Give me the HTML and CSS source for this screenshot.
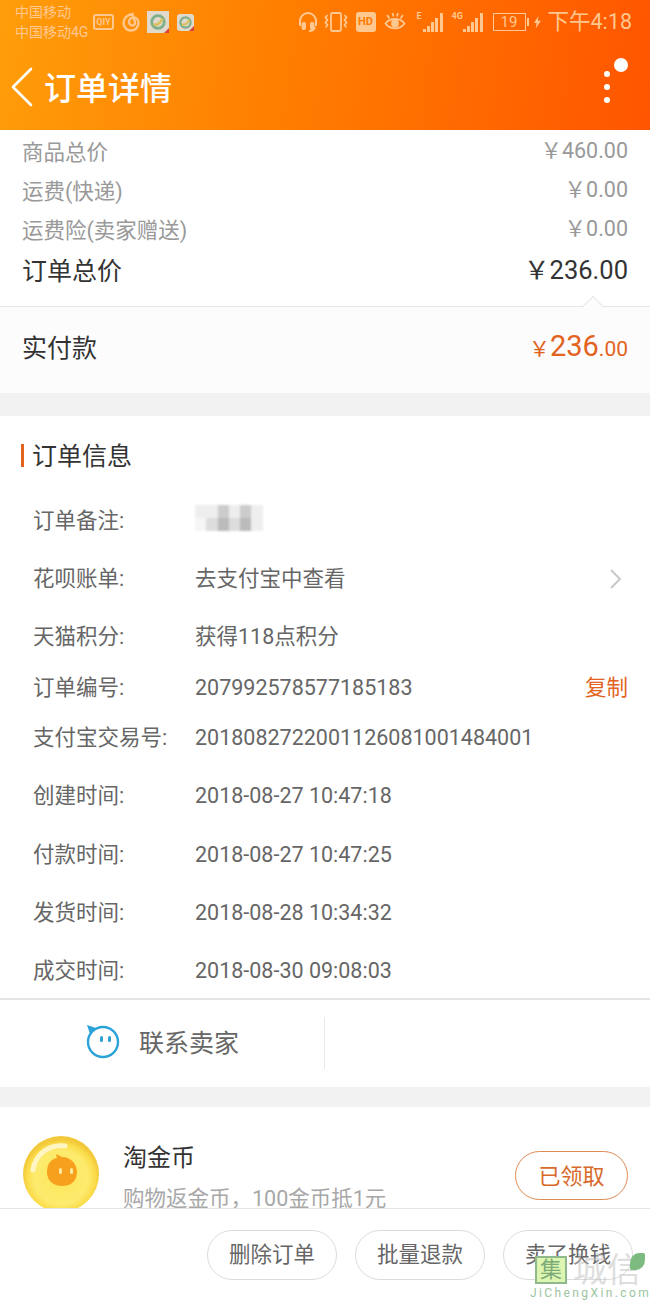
FILE: index.html
```html
<!DOCTYPE html>
<html lang="zh-CN">
<head>
    <meta charset="UTF-8">
    <meta name="viewport" content="width=device-width, initial-scale=1.0">
    <title>订单详情</title>
    <link rel="stylesheet" href="styles.css">
</head>
<body>
    <div class="page">
        <header class="topbar">
            <div class="statusbar">
                <div class="carrier">
                    <div>中国移动</div>
                    <div>中国移动4G</div>
                </div>
                <div class="app-icons">
                    <span class="qiyi">QIY</span>
                    <svg width="20" height="20" viewBox="0 0 20 20" fill="none" stroke="#ffc890" stroke-width="2.4"><path d="M11.500 2C6 3 2.500 6.500 2.500 11a7.500 7.500 0 0 0 15 0c0-3-2-5.500-5-5.500-2.500 0-4.500 2-4.500 4.500s2 3.500 3.500 3.500 3-1.500 2.500-3.500c-.5-2-1.500-3.500-2.500-8z"/></svg>
                    <span class="sim-icon sim-big"><svg width="16" height="16" viewBox="0 0 14 14" fill="none" stroke-width="2.400"><circle cx="7" cy="7" r="5.500" stroke="#7fae8a"/><path d="M3 9c3 1 6-1 8-5" stroke="#d8c060"/></svg></span>
                    <span class="sim-icon sim-small"><svg width="13" height="13" viewBox="0 0 14 14" fill="none" stroke-width="2.400"><circle cx="7" cy="7" r="5.500" stroke="#7fae8a"/><path d="M3 9c3 1 6-1 8-5" stroke="#d8c060"/></svg></span>
                </div>
                <div class="sys-icons">
                    <svg width="20" height="20" viewBox="0 0 20 20" fill="none" stroke="#ffc890" stroke-width="2"><path d="M2 14V9a8 8 0 0 1 16 0v5"/><rect x="4.500" y="11" width="2.500" height="6" rx="1" fill="#ffc890"/><rect x="13" y="11" width="2.500" height="6" rx="1" fill="#ffc890"/><path d="M17 15c-.5 2.500-3 4-6 4"/></svg>
                    <svg class="ic-vib" width="24" height="20" viewBox="0 0 24 20" fill="none" stroke="#ffc890" stroke-width="1.800"><rect x="7" y="1" width="10" height="18" rx="1.500"/><path d="M3.500 3l-2 2.500 2 2.500-2 2.500 2 2.500-2 2.500M20.500 3l2 2.500-2 2.500 2 2.500-2 2.500 2 2.500"/></svg>
                    <span class="hd">HD</span>
                    <svg class="ic-eye" width="22" height="20" viewBox="0 0 22 20" fill="none" stroke="#ffc890" stroke-width="1.800"><path d="M1.500 11.500c4.500-6 14.500-6 19 0-4.500 6.500-14.500 6.500-19 0z"/><circle cx="11" cy="11.500" r="3" fill="#ffc890"/><path d="M3 3l2.500 3.500M8.500 1l1 3.500M14 1l-1 3.500M19 3l-2.500 3.500"/></svg>
                    <span class="signal signal-e">
                        <span class="net">E</span>
                        <i class="b1"></i><i class="b2"></i><i class="b3"></i><i class="b4"></i><i class="b5"></i>
                    </span>
                    <span class="signal signal-4g">
                        <span class="net">4G</span>
                        <i class="b1"></i><i class="b2"></i><i class="b3"></i><i class="b4"></i><i class="b5"></i>
                    </span>
                    <span class="battery">19</span>
                    <span class="battery-tip"></span>
                    <svg class="ic-bolt" width="7" height="14" viewBox="0 0 8 14" fill="#ffc890"><path d="M5 0L0 8h3l-1 6 6-8.500H4.500z"/></svg>
                </div>
                <div class="clock">下午4:18</div>
            </div>
            <div class="navbar">
                <svg class="back" width="24" height="40" viewBox="0 0 24 40" fill="none" stroke="#fff" stroke-width="2.600" stroke-linecap="round" stroke-linejoin="round"><path d="M21 2L3 20l18 18"/></svg>
                <h1>订单详情</h1>
                <div class="more">
                    <span class="more-badge"></span>
                    <span class="dot"></span>
                    <span class="dot"></span>
                    <span class="dot"></span>
                </div>
            </div>
        </header>

        <main class="content">
            <section class="prices">
                <div class="price-row"><span>商品总价</span><span class="money">￥460.00</span></div>
                <div class="price-row"><span>运费(快递)</span><span class="money">￥0.00</span></div>
                <div class="price-row"><span>运费险(卖家赠送)</span><span class="money">￥0.00</span></div>
                <div class="price-row total"><span>订单总价</span><span class="money">￥236.00</span></div>
            </section>
            <section class="paid">
                <span class="notch"></span>
                <span>实付款</span>
                <span class="paid-money"><small>￥</small><b>236</b><em>.00</em></span>
            </section>

            <section class="info">
                <h2>订单信息</h2>
                <div class="info-row"><span class="key">订单备注:</span>
                    <span class="mosaic">
                        <i class="m1"></i><i class="m1"></i><i class="m3"></i><i class="m1"></i><i class="m3"></i><i class="m1"></i>
                        <i class="m0"></i><i class="m2"></i><i class="m4"></i><i class="m2"></i><i class="m4"></i><i class="m1"></i>
                    </span>
                </div>
                <div class="info-row"><span class="key">花呗账单:</span><span class="cjk">去支付宝中查看</span>
                    <svg class="chevron" width="14" height="22" viewBox="0 0 14 22" fill="none" stroke="#c8c8c8" stroke-width="2"><path d="M2 2l9 9-9 9"/></svg>
                </div>
                <div class="info-row"><span class="key">天猫积分:</span><span class="cjk">获得118点积分</span></div>
                <div class="info-row tight"><span class="key">订单编号:</span><span>207992578577185183</span><span class="copy cjk">复制</span></div>
                <div class="info-row"><span class="key">支付宝交易号:</span><span>2018082722001126081001484001</span></div>
                <div class="info-row"><span class="key">创建时间:</span><span>2018-08-27 10:47:18</span></div>
                <div class="info-row"><span class="key">付款时间:</span><span>2018-08-27 10:47:25</span></div>
                <div class="info-row"><span class="key">发货时间:</span><span>2018-08-28 10:34:32</span></div>
                <div class="info-row"><span class="key">成交时间:</span><span>2018-08-30 09:08:03</span></div>
            </section>

            <section class="contact">
                <div class="contact-item">
                    <svg width="36" height="36" viewBox="0 0 36 36" fill="none"><circle cx="18" cy="18" r="15" stroke="#2ba3d8" stroke-width="2.400"/><path d="M2 1l9 3-6 6z" fill="#2ba3d8"/><rect x="15" y="12" width="3" height="6" rx="1.500" fill="#2ba3d8"/><rect x="23" y="12" width="3" height="6" rx="1.500" fill="#2ba3d8"/></svg>
                    <span>联系卖家</span>
                </div>
                <div class="contact-item"></div>
            </section>

            <section class="coin">
                <svg class="coin-pic" width="76" height="76" viewBox="0 0 76 76">
                    <defs>
                        <radialGradient id="coin-fill" cx="50%" cy="55%" r="50%">
                            <stop offset="0%" stop-color="#fde65a"/>
                            <stop offset="70%" stop-color="#fdeb6e"/>
                            <stop offset="90%" stop-color="#fbdc4a"/>
                            <stop offset="100%" stop-color="#f3c93c"/>
                        </radialGradient>
                    </defs>
                    <circle cx="38" cy="38" r="38" fill="url(#coin-fill)"/>
                    <path d="M10 34a28 28 0 0 1 32-24" stroke="#fff6c4" stroke-width="5" fill="none" stroke-linecap="round"/>
                    <path d="M33 18l6 3c9 0 15 7 15 15 0 10-7 14-15 14s-15-5-15-14c0-8 4-13 10-14z" fill="#f7a01e"/>
                    <rect x="36" y="32" width="3" height="6" rx="1.500" fill="#fde9a0"/>
                    <rect x="47" y="32" width="3" height="6" rx="1.500" fill="#fde9a0"/>
                </svg>
                <div class="coin-text">
                    <div class="coin-title">淘金币</div>
                    <div class="coin-sub">购物返金币，100金币抵1元</div>
                </div>
                <span class="claimed">已领取</span>
            </section>
        </main>

        <footer class="actions">
            <button>删除订单</button>
            <button>批量退款</button>
            <button>卖了换钱</button>
        </footer>

        <!-- watermark -->
        <div class="watermark">
            <div class="wm-top">
                <span class="wm-box">集</span>
                <span class="wm-name">城信</span>
                <span class="wm-leaf"></span>
            </div>
            <div class="wm-url">JiChengXin.com</div>
        </div>
    </div>
</body>
</html>
```

FILE: styles.css
```css
* {
    box-sizing: border-box;
}

html, body {
    margin: 0;
    padding: 0;
}

body {
    font-family: Roboto, "Noto Sans CJK SC", sans-serif;
    color: #666;
    background: #fff;
}

.page {
    position: relative;
    display: flex;
    flex-direction: column;
    width: 650px;
    height: 1300px;
    overflow: hidden;
}

/* top bar */
.topbar {
    height: 130px;
    flex: none;
    background: linear-gradient(98deg, #ff9d0a 0%, #ff7d00 45%, #ff5500 100%);
    color: #fff;
}

.statusbar {
    display: flex;
    align-items: flex-start;
    height: 44px;
    padding: 2px 18px 0 15px;
    color: #ffc890;
}

.carrier {
    width: 78px;
    font-size: 14px;
    line-height: 20px;
}

.app-icons {
    display: flex;
    align-items: center;
    gap: 7px;
    height: 40px;
}

.qiyi {
    width: 21px;
    height: 16px;
    border: 2px solid #ffc890;
    border-radius: 3px;
    font-size: 9px;
    font-weight: 700;
    line-height: 12px;
    text-align: center;
}

.sim-icon {
    position: relative;
    display: flex;
    align-items: center;
    justify-content: center;
    background: #e0d9cc;
}

.sim-icon::after {
    content: "";
    position: absolute;
    right: 0;
    bottom: 0;
    border-style: solid;
    border-width: 0 0 5px 5px;
    border-color: transparent transparent #d8433a transparent;
}

.sim-big {
    width: 22px;
    height: 22px;
    margin-left: -1px;
}

.sim-small {
    width: 17px;
    height: 17px;
    margin-left: 1px;
    border-radius: 3px;
}

.sys-icons {
    display: flex;
    align-items: center;
    height: 40px;
    margin-left: auto;
}

.ic-vib {
    margin-left: 6px;
}

.hd {
    width: 20px;
    height: 20px;
    margin-left: 8px;
    border-radius: 3px;
    background: #ffc890;
    color: #ff7a00;
    font-size: 11px;
    font-weight: 700;
    line-height: 20px;
    text-align: center;
}

.ic-eye {
    margin-left: 8px;
}

.signal {
    position: relative;
    display: flex;
    align-items: flex-end;
    gap: 1.300px;
    height: 20px;
}

.signal-e {
    width: 27px;
    margin-left: 11px;
    padding-left: 6px;
}

.signal-4g {
    width: 32px;
    margin-left: 8px;
    padding-left: 11px;
}

.signal i {
    display: block;
    flex: none;
    width: 3px;
    background: #ffc890;
}

.signal .b1 { height: 3px; }
.signal .b2 { height: 6px; }
.signal .b3 { height: 10px; }
.signal .b4 { height: 14px; }
.signal .b5 { height: 19px; }

.net {
    position: absolute;
    left: 0;
    top: 0;
    font-size: 9px;
    font-weight: 700;
    line-height: 9px;
}

.battery {
    width: 33px;
    height: 18px;
    margin-left: 9px;
    border: 1px solid #ffc890;
    font-size: 15px;
    line-height: 16px;
    text-align: center;
}

.battery-tip {
    width: 2px;
    height: 8px;
    margin-left: 1px;
    background: #ffc890;
}

.ic-bolt {
    margin-left: 5px;
}

.clock {
    margin-left: 7px;
    font-size: 21.500px;
    line-height: 40px;
}

.navbar {
    position: relative;
    display: flex;
    align-items: center;
    height: 86px;
    padding: 0 0 0 10px;
}

.back {
    margin-top: -1px;
}

.navbar h1 {
    margin: -2px 0 0 10px;
    font-size: 32px;
    font-weight: 500;
    color: #fff;
}

.more {
    position: absolute;
    left: 604px;
    top: 27px;
    display: flex;
    flex-direction: column;
    gap: 7px;
}

.dot {
    width: 6px;
    height: 6px;
    border-radius: 50%;
    background: #fff;
}

.more-badge {
    position: absolute;
    left: 10px;
    top: -13px;
    width: 14px;
    height: 14px;
    border-radius: 50%;
    background: #fff;
}

/* main content */
.content {
    flex: 1;
    min-height: 0;
    overflow: hidden;
    background: #f2f2f2;
}

.prices {
    height: 177px;
    padding: 3px 22px 0;
    background: #fff;
    border-bottom: 1px solid #e6e6e6;
}

.price-row {
    display: flex;
    justify-content: space-between;
    align-items: center;
    height: 39px;
    padding-bottom: 5px;
    font-size: 21.500px;
    color: #999;
}

.money {
    margin-top: -3px;
}

.total {
    height: 42px;
    font-size: 25px;
    color: #333;
}

.total .money {
    font-size: 25.500px;
}

.paid {
    position: relative;
    display: flex;
    justify-content: space-between;
    align-items: center;
    height: 86px;
    padding: 0 22px 8px;
    background: #fcfcfc;
    font-size: 25px;
    color: #333;
}

.notch {
    position: absolute;
    right: 49px;
    top: -8px;
    width: 16px;
    height: 16px;
    background: #fcfcfc;
    border-top: 1px solid #e6e6e6;
    border-left: 1px solid #e6e6e6;
    transform: rotate(45deg);
}

.paid-money {
    color: #e2631e;
}

.paid-money small {
    font-size: 21px;
}

.paid-money b {
    font-size: 29px;
    font-weight: 400;
}

.paid-money em {
    font-size: 21px;
    font-style: normal;
}

.info {
    height: 584px;
    margin-top: 23px;
    background: #fff;
    border-bottom: 2px solid #e4e4e4;
}

.info h2 {
    position: relative;
    height: 75px;
    margin: 0;
    padding: 23px 0 0 32px;
    font-size: 25px;
    font-weight: 400;
    line-height: 36px;
    color: #333;
}

.info h2::before {
    content: "";
    position: absolute;
    left: 21px;
    top: 28px;
    width: 3px;
    height: 23px;
    background: #e2631e;
}

.info-row {
    position: relative;
    display: flex;
    align-items: center;
    height: 58.400px;
    padding: 0 22px 0 33px;
    font-size: 21.500px;
    color: #666;
}

.info-row.tight {
    height: 42px;
}

.key {
    width: 162px;
    flex: none;
    margin-top: -4px;
}

.cjk {
    margin-top: -4px;
}

.copy {
    margin-left: auto;
    color: #e2631e;
}

.chevron {
    margin-left: auto;
    margin-right: 5px;
}

.mosaic {
    display: grid;
    grid-template-columns: repeat(6, 11.300px);
    grid-template-rows: repeat(2, 13px);
    margin-top: -5px;
    filter: blur(0.8px);
}

.mosaic i {
    display: block;
}

.m0 { background: #f6f6f6; }
.m1 { background: #eeeeee; }
.m2 { background: #dddddd; }
.m3 { background: #cccccc; }
.m4 { background: #bbbbbb; }

.contact {
    display: flex;
    align-items: center;
    height: 87px;
    background: #fff;
}

.contact-item {
    display: flex;
    align-items: center;
    justify-content: center;
    gap: 18px;
    width: 326px;
    height: 52px;
    margin-top: -1px;
    border-right: 1px solid #e8e8e8;
    font-size: 25px;
    color: #666;
}

.contact-item span {
    margin-top: -4px;
}

.contact-item svg {
    margin-top: -2px;
}

.contact-item:last-child {
    border-right: none;
}

.coin {
    position: relative;
    display: flex;
    height: 101px;
    margin-top: 20px;
    padding: 29px 22px 0 23px;
    background: #fff;
}

.coin-pic {
    flex: none;
}

.coin-text {
    margin-left: 24px;
}

.coin-title {
    margin-top: 7px;
    font-size: 24px;
    line-height: 30px;
    color: #333;
}

.coin-sub {
    margin-top: 11px;
    font-size: 21.500px;
    line-height: 30px;
    color: #a8a8a8;
}

.claimed {
    position: absolute;
    right: 22px;
    top: 44px;
    width: 113px;
    height: 49px;
    border: 1px solid #dd8a55;
    border-radius: 25px;
    font-size: 22px;
    line-height: 49px;
    text-align: center;
    color: #d9692a;
}

/* bottom actions */
.actions {
    position: relative;
    display: flex;
    flex: none;
    justify-content: flex-end;
    gap: 18px;
    height: 92px;
    padding: 21px 17px 0 0;
    background: #fff;
    border-top: 1px solid #e6e6e6;
}

.actions button {
    width: 130px;
    height: 50px;
    padding: 0 0 5px;
    background: #fff;
    border: 1px solid #dcdcdc;
    border-radius: 25px;
    font-family: inherit;
    font-size: 21.500px;
    color: #666;
}

/* watermark */
.watermark {
    position: absolute;
    left: 530px;
    top: 1255px;
    width: 120px;
}

.wm-top {
    display: flex;
    align-items: center;
    height: 30px;
    padding-left: 5px;
}

.wm-box {
    width: 32px;
    height: 28px;
    border: 2px solid #8fb98a;
    background: #dcf5b0;
    font-size: 22px;
    line-height: 23px;
    text-align: center;
    color: #7cab78;
}

.wm-name {
    margin-left: 6px;
    font-size: 34px;
    line-height: 30px;
    color: rgba(190, 190, 190, 0.5);
}

.wm-leaf {
    position: absolute;
    left: 100px;
    top: -2px;
    width: 15px;
    height: 17px;
    border-radius: 60% 10% 60% 10%;
    background: #7dbb80;
}

.wm-url {
    margin-top: 1px;
    font-size: 12px;
    letter-spacing: 2.400px;
    color: #9cc4a0;
    white-space: nowrap;
}
```
